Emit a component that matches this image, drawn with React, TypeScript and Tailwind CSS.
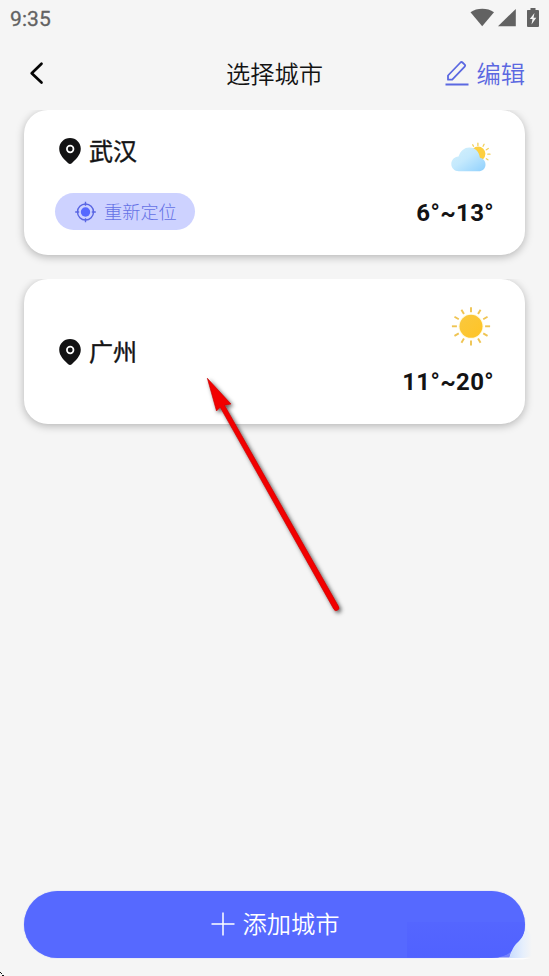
import React from 'react';

const cjk = "font-['Noto_Sans_CJK_SC',sans-serif]";

function StatusBar() {
  return (
    <div className="flex h-9 items-center justify-between pl-[10px] pr-[9px] text-[#626262]">
      <span className="pt-[2px] font-['Roboto',sans-serif] text-[21px] leading-none tracking-[0.1px] [-webkit-text-stroke:0.3px_#626262]">9:35</span>
      <svg width="70" height="20" viewBox="0 0 70 20" fill="#626262">
        <path d="M.5 4.2C7-.4 17.500-.4 24 4.200L12.200 18.300Z" />
        <path d="M45.800 1v17.200H28Z" />
        <path d="M57.500 2h3V0h5v2H68q1 0 1 1v15q0 1-1 1H58q-1 0-1-1V3q0-1 .5-1Z" />
        <path d="m64.500 5-4.700 6h2.700l-1 5.500 4.800-6.700h-2.800Z" fill="#f5f5f5" />
      </svg>
    </div>
  );
}

function Pin() {
  return (
    <svg width="22" height="26" viewBox="0 0 22 26">
      <path d="M11 0C4.900 0 .2 4.800.2 10.700c0 6.400 5.200 10.600 9 14.500q1.800 1.400 3.600 0c3.800-3.900 9-8.100 9-14.500C21.800 4.800 17.100 0 11 0Z" fill="#131314" />
      <circle cx="11.200" cy="11" r="3.300" fill="none" stroke="#fff" strokeWidth="1.700" />
    </svg>
  );
}

function Cloudy() {
  return (
    <svg width="40" height="40" viewBox="0.7 -0.8 40 40">
      <defs>
        <linearGradient id="cloud" x1="0" y1="0" x2="1" y2="1">
          <stop offset="0" stopColor="#d5f1fc" />
          <stop offset=".45" stopColor="#c4e9fd" />
          <stop offset="1" stopColor="#8fd0fd" />
        </linearGradient>
      </defs>
      <g stroke="#f1d05c" strokeWidth="1.300" strokeLinecap="round">
        <path d="M22.400 7l.8 1.500M27.600 5.400v2.200M33.800 6.500l-1 2M38 10.700l-2 1.300M37.500 16.400h2.200M36 21l1.600 1" />
      </g>
      <circle cx="27.800" cy="16" r="7.300" fill="#fdcf3f" />
      <path d="M8.500 33.500C4 33.500 1 30.300 1 26.300c0-4 3-7.300 7.200-7.500C10 13 14 9.600 19 9.600c6.200 0 10 4.500 10.600 10.400 3.200.6 5.600 3.300 5.600 6.700 0 4-3 6.800-7 6.800Z" fill="url(#cloud)" />
    </svg>
  );
}

function Sunny() {
  return (
    <svg width="40" height="40" viewBox="0 0 40 40">
      <defs>
        <linearGradient id="sun" x1="0" y1="0" x2="1" y2="1">
          <stop stopColor="#f9c83f" />
          <stop offset="1" stopColor="#ffc425" />
        </linearGradient>
      </defs>
      <circle cx="20" cy="20.300" r="12.500" fill="#fffbe0" />
      <circle cx="20" cy="20.300" r="11.500" fill="url(#sun)" />
      {[0, 30, 60, 90, 120, 150, 180, 210, 240, 270, 300, 330].map((angle) => (
        <path key={angle} d="M20 1.200v5" stroke="#efc453" strokeWidth="1.900" transform={`rotate(${angle} 20 20.300)`} />
      ))}
    </svg>
  );
}

type CityProps = { name: string; temperature: string; icon: React.ReactNode; located?: boolean };

function CityCard({ name, temperature, icon, located }: CityProps) {
  return (
    <div className="-mx-6 overflow-hidden px-6 pb-6">
      <section className="flex h-[145px] justify-between rounded-[24px] bg-white pl-[31px] pr-[31px] shadow-[0_2px_8px_rgba(0,0,0,0.27)]">
        <div className={`flex flex-col items-start ${located ? 'pt-[22px]' : 'justify-center'}`}>
          <div className="flex h-[38px] items-center gap-2 pl-1">
            <Pin />
            <h2 className={`${cjk} pb-[2px] text-[24px] leading-9 text-[#131314] [-webkit-text-stroke:0.4px_#131314]`}>{name}</h2>
          </div>
          {located && (
            <button className={`${cjk} mt-[23px] flex h-[37px] w-[140px] items-center gap-2 rounded-full bg-[#cdd2ff] pl-5 text-[18.2px] font-light text-[#6471e6]`}>
              <svg width="21" height="22" viewBox="0 0 21 22" fill="none" stroke="#5966e3" strokeWidth="1.400">
                <circle cx="10.500" cy="11" r="8" />
                <circle cx="10.500" cy="11" r="4.700" fill="#5669ff" stroke="none" />
                <path d="M10.500.7v4M10.500 17.300v4M.2 11h4M16.800 11h4" />
              </svg>
              重新定位
            </button>
          )}
        </div>
        <div className="flex flex-col items-end pt-[27px]">
          <div className="mr-[3px] h-10">{icon}</div>
          <div className="mt-[17px] whitespace-nowrap font-['Roboto',sans-serif] text-[24px] font-bold leading-[38px] tracking-[0.35px] text-[#131314]">{temperature}</div>
        </div>
      </section>
    </div>
  );
}

function Arrow() {
  return (
    <svg className="pointer-events-none absolute left-[190px] top-[360px]" width="170" height="270" viewBox="190 360 170 270">
      <defs>
        <filter id="arrow-shadow" x="-20%" y="-20%" width="150%" height="150%">
          <feDropShadow dx="2" dy="2" stdDeviation="2.200" floodColor="#000" floodOpacity=".65" />
        </filter>
      </defs>
      <path d="M207.300 378.200 231 404l-6.500 1.200L338.600 606.500a2.700 2.700 0 0 1-4.800 2.700L220.200 407.300l-3.700 3.700Z" fill="#f20000" stroke="#bd0000" strokeWidth=".6" filter="url(#arrow-shadow)" />
    </svg>
  );
}

function ButtonCorner() {
  return (
    <svg className="pointer-events-none absolute -right-3 bottom-[-10px]" width="130" height="48" viewBox="407 920 130 48">
      <defs>
        <linearGradient id="corner-tint" x1="0" y1="0" x2="0" y2="1">
          <stop stopColor="#505fff" stopOpacity=".3" />
          <stop offset="1" stopColor="#4f60ff" stopOpacity=".8" />
        </linearGradient>
        <linearGradient id="corner-light" x1="0" y1="0" x2="1" y2="0">
          <stop stopColor="#c8dcff" />
          <stop offset=".6" stopColor="#e6effc" />
          <stop offset="1" stopColor="#f5f5f5" />
        </linearGradient>
      </defs>
      <path d="M407 922H525V928C524.500 936 520 940 516 944C512 949 511 953 509.500 957.500H407Z" fill="url(#corner-tint)" />
      <path d="M525.500 928C524.500 936 520 940 516 944C512 949 511 953 509.500 958H524L532 956V936Z" fill="url(#corner-light)" />
      <path d="M480 958H531l-8 1.500H480Z" fill="#fff" opacity=".75" />
    </svg>
  );
}

export default function App() {
  return (
    <div className="relative flex h-[976px] w-full flex-col overflow-hidden bg-[#f5f5f5]">
      <StatusBar />
      <header className="grid h-[74px] grid-cols-3 items-center px-6">
        <button aria-label="返回" className="justify-self-start pl-[5px]">
          <svg width="16" height="24" viewBox="0 0 16 24" fill="none" stroke="#050505" strokeWidth="2.700" strokeLinecap="round" strokeLinejoin="round">
            <path d="M12.500 2.800 2.700 12.200l9.800 9.300" />
          </svg>
        </button>
        <h1 className={`${cjk} justify-self-center whitespace-nowrap text-[24.3px] font-[350] leading-9 text-[#131313]`}>选择城市</h1>
        <button className={`${cjk} flex items-center gap-[7px] justify-self-end whitespace-nowrap text-[24.3px] font-[350] leading-9 text-[#5b68e1]`}>
          <svg width="24" height="26" viewBox="0 0 24 26" fill="none" stroke="#5b68e1" strokeWidth="1.800" strokeLinejoin="round">
            <path d="m3 15.500 12.500-13q1-.9 2 0l2.200 2.100q1 1 0 2L7.200 19.700H3ZM.5 24.500h23" />
          </svg>
          编辑
        </button>
      </header>
      <main className="flex flex-1 flex-col px-6">
        <CityCard name="武汉" temperature="6°~13°" icon={<Cloudy />} located />
        <CityCard name="广州" temperature="11°~20°" icon={<Sunny />} />
      </main>
      <footer className="px-6 pb-[18px]">
        <div className="relative">
          <button className={`${cjk} flex h-[67px] w-full items-center justify-center gap-[7px] rounded-full bg-[#5669ff] pb-[2px] pl-[2px] text-[24.3px] font-[350] text-white shadow-[0_0_1px_#8795ff]`}>
            <svg width="24" height="24" viewBox="0 0 24 24" stroke="white" strokeWidth="1.500">
              <path d="M12 .5v23M.5 12h23" />
            </svg>
            添加城市
          </button>
          <ButtonCorner />
        </div>
      </footer>
      <Arrow />
      <svg className="absolute bottom-0 left-0" width="4" height="4" viewBox="0 0 4 4" fill="#111" shapeRendering="crispEdges">
        <path d="M0 0h1v1H0ZM1 1h1v1H1ZM2 3h2v1H2Z" />
      </svg>
    </div>
  );
}
